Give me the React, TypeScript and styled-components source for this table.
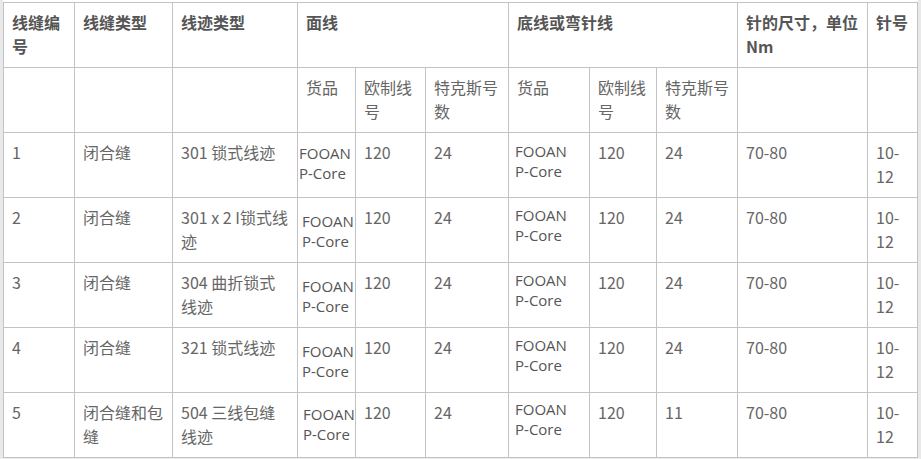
import React from 'react';
import styled, {createGlobalStyle} from 'styled-components';

const GlobalStyle = createGlobalStyle`
  html, body {
    margin: 0;
    padding: 0;
    background: #ffffff;
  }
`

const Frame = styled.div`
  width: 921px;
  box-sizing: border-box;
  padding-top: 2px;
  border-left: 3px solid #e9e9e9;
  border-right: 3px solid #e9e9e9;
  border-bottom: 2px solid #ececec;
  background: #ffffff;
`

const Table = styled.table`
  width: 915px;
  border-collapse: collapse;
  table-layout: fixed;
  font-family: "Noto Sans CJK SC", "Liberation Sans", sans-serif;
  font-size: 16px;
  line-height: 24px;
  color: #666666;
`

const Row = styled.tr`
  height: 65px;
`

const Cell = styled.td`
  border: 1px solid #c3c3c3;
  padding: 7px 8px;
  vertical-align: top;
  text-align: left;
  word-break: normal;
`

const HeadCell = styled.th`
  border: 1px solid #c3c3c3;
  padding: 7px 8px;
  vertical-align: top;
  text-align: left;
  font-weight: bold;
  color: #555555;
`

const SubHeadCell = styled(Cell)`
  color: #666666;
`

const ProductCell = styled.td<{ $dx: number; $dy: number }>`
  border: 1px solid #c3c3c3;
  padding: ${p => p.$dy}px 0 0 ${p => p.$dx}px;
  vertical-align: top;
  text-align: left;
  font-family: "Open Sans", "Liberation Sans", sans-serif;
  font-size: 15px;
  line-height: 20px;
  color: #555555;
`

const Word = styled.span`
  white-space: nowrap;
`

const widths = [71, 98, 125, 58, 70, 83, 81, 67, 81, 130, 50];

type Offset = { dx: number; dy: number };

interface Seam {
    no: string;
    type: string;
    stitch: string;
    top: Offset;
    bottom: Offset;
    bottomTex: string;
}

const seams: Seam[] = [
    {no: '1', type: '闭合缝', stitch: '301 锁式线迹', top: {dx: 1, dy: 10}, bottom: {dx: 6, dy: 8}, bottomTex: '24'},
    {no: '2', type: '闭合缝', stitch: '301 x 2 I锁式线迹', top: {dx: 4, dy: 13}, bottom: {dx: 6, dy: 7}, bottomTex: '24'},
    {no: '3', type: '闭合缝', stitch: '304 曲折锁式线迹', top: {dx: 4, dy: 13}, bottom: {dx: 6, dy: 7}, bottomTex: '24'},
    {no: '4', type: '闭合缝', stitch: '321 锁式线迹', top: {dx: 4, dy: 13}, bottom: {dx: 6, dy: 7}, bottomTex: '24'},
    {no: '5', type: '闭合缝和包缝', stitch: '504 三线包缝线迹', top: {dx: 5, dy: 11}, bottom: {dx: 6, dy: 6}, bottomTex: '11'},
];

const Product = ({at}: { at: Offset }) => (
    <ProductCell $dx={at.dx} $dy={at.dy}>
        <Word>FOOAN</Word> <Word>P-Core</Word>
    </ProductCell>
)

const App = () => {
    return (
        <Frame>
            <GlobalStyle/>
            <Table>
                <colgroup>
                    {widths.map((w, i) => <col key={i} style={{width: w}}/>)}
                </colgroup>
                <thead>
                <Row>
                    <HeadCell>线缝编号</HeadCell>
                    <HeadCell>线缝类型</HeadCell>
                    <HeadCell>线迹类型</HeadCell>
                    <HeadCell colSpan={3}>面线</HeadCell>
                    <HeadCell colSpan={3}>底线或弯针线</HeadCell>
                    <HeadCell>针的尺寸，单位Nm</HeadCell>
                    <HeadCell>针号</HeadCell>
                </Row>
                <Row>
                    <SubHeadCell></SubHeadCell>
                    <SubHeadCell></SubHeadCell>
                    <SubHeadCell></SubHeadCell>
                    <SubHeadCell>货品</SubHeadCell>
                    <SubHeadCell>欧制线号</SubHeadCell>
                    <SubHeadCell>特克斯号数</SubHeadCell>
                    <SubHeadCell>货品</SubHeadCell>
                    <SubHeadCell>欧制线号</SubHeadCell>
                    <SubHeadCell>特克斯号数</SubHeadCell>
                    <SubHeadCell></SubHeadCell>
                    <SubHeadCell></SubHeadCell>
                </Row>
                </thead>
                <tbody>
                {seams.map(s => (
                    <Row key={s.no}>
                        <Cell>{s.no}</Cell>
                        <Cell>{s.type}</Cell>
                        <Cell>{s.stitch}</Cell>
                        <Product at={s.top}/>
                        <Cell>120</Cell>
                        <Cell>24</Cell>
                        <Product at={s.bottom}/>
                        <Cell>120</Cell>
                        <Cell>{s.bottomTex}</Cell>
                        <Cell>70-80</Cell>
                        <Cell>10-12</Cell>
                    </Row>
                ))}
                </tbody>
            </Table>
        </Frame>
    )
}

export default App;
